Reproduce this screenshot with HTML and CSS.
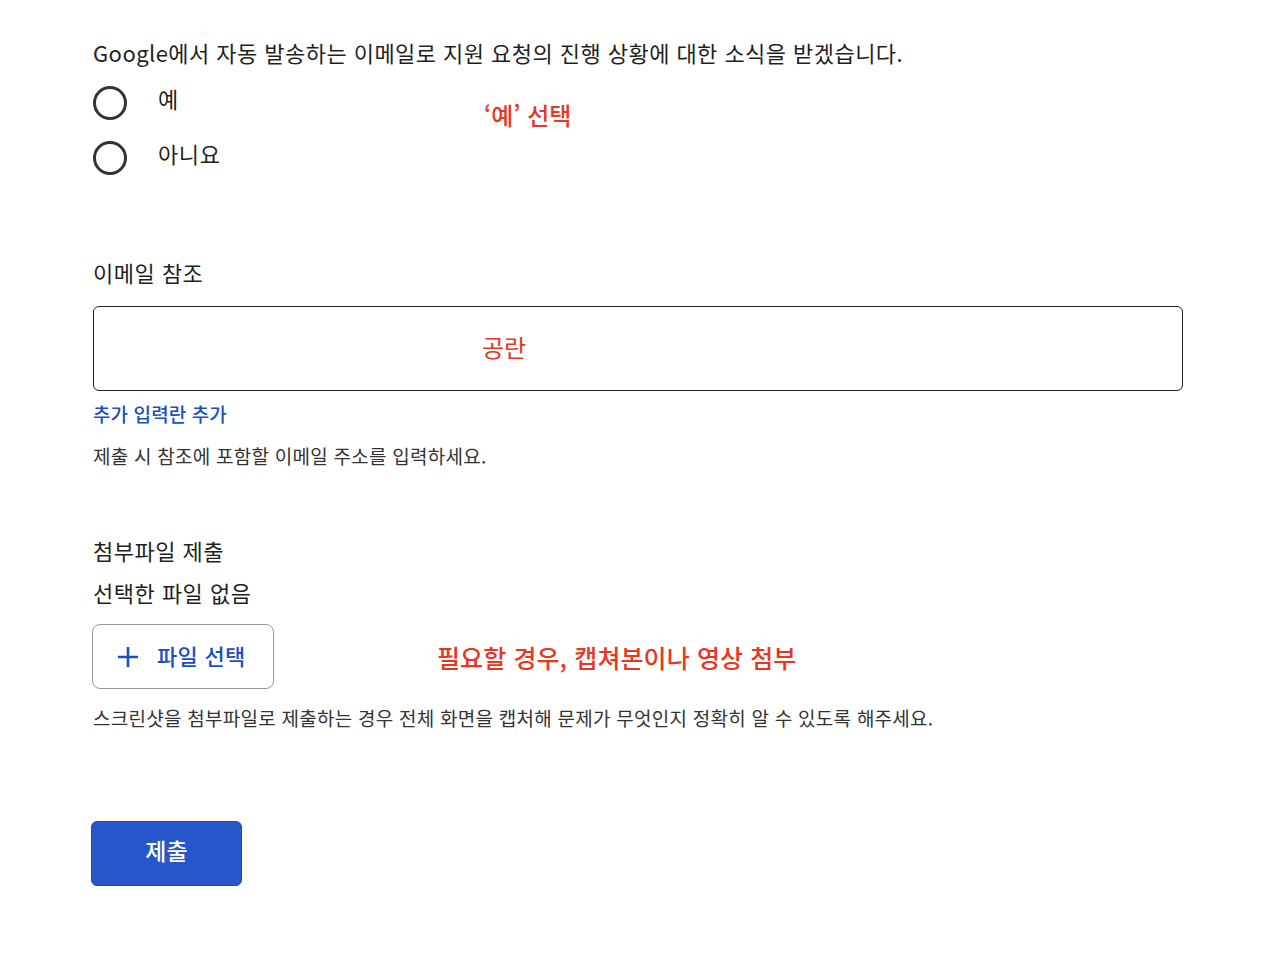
FILE: index.html
```html
<!DOCTYPE html>
<html lang="ko">
<head>
<meta charset="utf-8">
<title>지원 요청</title>
<link rel="stylesheet" href="styles.css">
</head>
<body>
<main class="form">
  <section class="group radios">
    <p class="question">Google에서 자동 발송하는 이메일로 지원 요청의 진행 상황에 대한 소식을 받겠습니다.</p>
    <div class="options">
      <label class="option"><span class="circle"></span><span class="opt-text">예</span></label>
      <label class="option"><span class="circle"></span><span class="opt-text">아니요</span></label>
    </div>
    <span class="note note-yes">‘예’ 선택</span>
  </section>

  <section class="group cc">
    <p class="label">이메일 참조</p>
    <div class="input-box"></div>
    <span class="note note-blank">공란</span>
    <a class="link">추가 입력란 추가</a>
    <p class="help help-cc">제출 시 참조에 포함할 이메일 주소를 입력하세요.</p>
  </section>

  <section class="group attach">
    <p class="label">첨부파일 제출</p>
    <p class="label no-file">선택한 파일 없음</p>
    <button class="file-btn" type="button">
      <svg class="plus" width="22" height="22" viewBox="0 0 22 22"><path d="M11 1v20M1 11h20" stroke="#1a4fc0" stroke-width="2.6" fill="none"/></svg>
      <span>파일 선택</span>
    </button>
    <span class="note note-file">필요할 경우, 캡쳐본이나 영상 첨부</span>
    <p class="help help-file">스크린샷을 첨부파일로 제출하는 경우 전체 화면을 캡처해 문제가 무엇인지 정확히 알 수 있도록 해주세요.</p>
  </section>

  <button class="submit" type="button">제출</button>
</main>
</body>
</html>
```

FILE: styles.css
```css
* { box-sizing: border-box; }
html, body { margin: 0; background: #fff; }
body {
  font-family: "Noto Sans CJK KR", "Noto Sans", sans-serif;
  color: #1f1f1f;
}
p { margin: 0; }
.form {
  padding: 37px 0 0 93px;
  width: 1183px;
  display: flex;
  flex-direction: column;
  align-items: flex-start;
}
.group { position: relative; width: 100%; }
.question {
  font-size: 22px;
  line-height: 30px;
  letter-spacing: 0.45px;
  white-space: nowrap;
}
.options {
  margin-top: 19px;
  display: flex;
  flex-direction: column;
  gap: 21px;
}
.option {
  display: flex;
  align-items: center;
  height: 34px;
}
.circle {
  width: 34px;
  height: 34px;
  border: 3px solid #333;
  border-radius: 50%;
  flex: none;
}
.opt-text {
  margin-left: 31px;
  font-size: 22px;
  line-height: 30px;
  letter-spacing: 0.6px;
  position: relative;
  top: -5px;
}
.note {
  position: absolute;
  color: #e8361f;
  font-size: 24px;
  line-height: 30px;
  font-weight: 500;
  white-space: nowrap;
}
.note-yes { left: 391px; top: 63px; }
.note-blank { left: 389px; top: 75px; font-weight: 400; }
.note-file { left: 344px; top: 107px; font-size: 25px; letter-spacing: 0.1px; }

.cc { margin-top: 82px; }
.label {
  font-size: 22px;
  line-height: 30px;
  letter-spacing: 0.5px;
}
.input-box {
  margin-top: 19px;
  width: 1090px;
  height: 85px;
  border: 1.5px solid #222;
  border-radius: 6px;
}
.link {
  display: block;
  margin-top: 10px;
  color: #1a4fc0;
  font-size: 19px;
  line-height: 26px;
  font-weight: 500;
  letter-spacing: 0.1px;
}
.help {
  font-size: 19px;
  line-height: 26px;
  letter-spacing: 0.25px;
  color: #333;
  white-space: nowrap;
}
.help-cc { margin-top: 16px; }

.attach { margin-top: 66px; }
.no-file { margin-top: 12px; }
.file-btn {
  margin-top: 17px;
  margin-left: -1px;
  width: 182px;
  height: 65px;
  border: 1.5px solid #9a9a9a;
  border-radius: 8px;
  background: #fff;
  display: flex;
  align-items: center;
  padding: 0 0 0 24px;
  gap: 18px;
  font-family: inherit;
  color: #1a4fc0;
  font-size: 22px;
  letter-spacing: 0.3px;
  font-weight: 500;
  cursor: pointer;
}
.file-btn span { position: relative; top: -2px; }
.plus { flex: none; }
.help-file { margin-top: 16px; }

.submit {
  margin-top: 90px;
  margin-left: -2px;
  width: 151px;
  height: 65px;
  border: 1px solid #1d4cb8;
  border-radius: 6px;
  background: #2557cb;
  color: #fff;
  font-family: inherit;
  font-size: 23px;
  line-height: 30px;
  font-weight: 500;
  padding: 0 0 7px;
  cursor: pointer;
}
```
